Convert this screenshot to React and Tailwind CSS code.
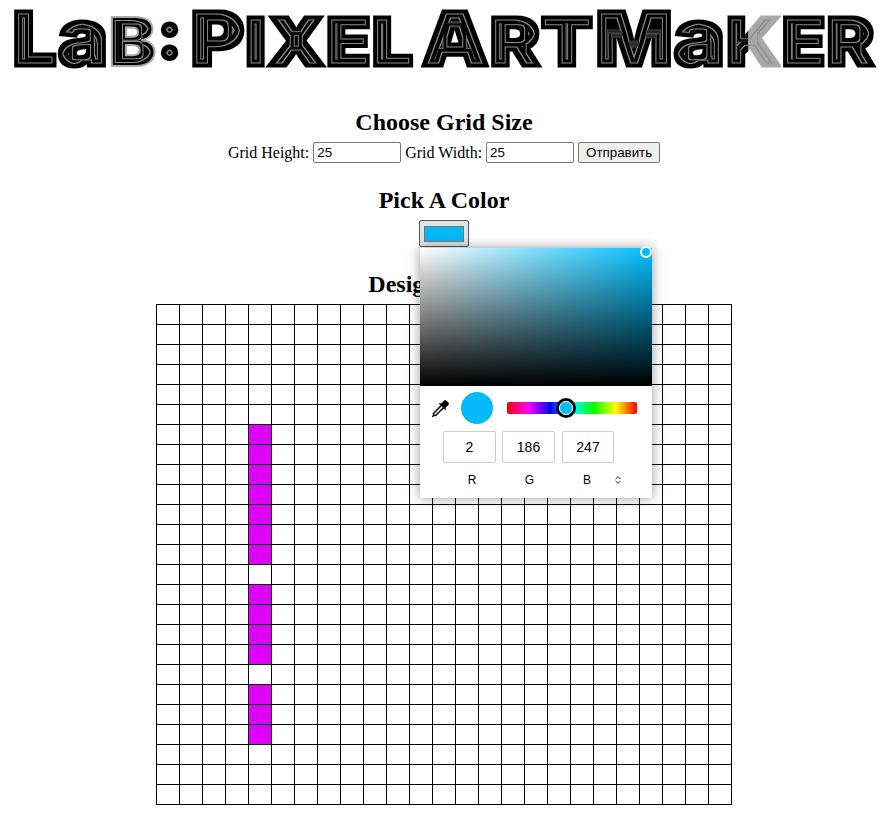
import React from 'react';
import { BsEyedropper } from 'react-icons/bs';
import { ChevronsUpDown } from 'lucide-react';

const ROWS = 25;
const COLS = 25;
const PAINTED_COL = 4;
const PAINTED_ROWS = [6, 7, 8, 9, 10, 11, 12, 14, 15, 16, 17, 19, 20, 21];

// Inline contour lines on the title letters
const ContourFilter = () => (
  <svg className="absolute w-0 h-0" aria-hidden="true">
    <defs>
      <filter id="contour" x="-5%" y="-25%" width="110%" height="150%" colorInterpolationFilters="sRGB">
        <feMorphology in="SourceAlpha" operator="erode" radius="4" result="e4" />
        <feMorphology in="SourceAlpha" operator="erode" radius="5" result="e5" />
        <feMorphology in="SourceAlpha" operator="erode" radius="8" result="e8" />
        <feMorphology in="SourceAlpha" operator="erode" radius="9" result="e9" />
        <feComposite in="e4" in2="e5" operator="out" result="r1" />
        <feComposite in="e8" in2="e9" operator="out" result="r2" />
        <feFlood floodColor="#8c8c8c" />
        <feComposite in2="r1" operator="in" result="l1" />
        <feFlood floodColor="#8c8c8c" />
        <feComposite in2="r2" operator="in" result="l2" />
        <feMerge>
          <feMergeNode in="SourceGraphic" />
          <feMergeNode in="l1" />
          <feMergeNode in="l2" />
        </feMerge>
      </filter>
    </defs>
  </svg>
);

const Title = () => (
  <h1 className="flex items-baseline h-[86px] pl-[12px] -mt-[6px] whitespace-nowrap [font-family:Inter,sans-serif] font-black leading-[86px] text-black [-webkit-text-stroke:3px_black] [filter:url(#contour)]">
    <span className="block w-[178px] origin-left scale-x-[1.05]">
      <span className="text-[76px]">L</span>
      <span className="text-[82px]">a</span>
      <span className="text-[68px] [-webkit-text-stroke:2px_#aaaaaa]">B</span>
      <span className="text-[68px]">:</span>
    </span>
    <span className="block w-[231px] origin-left scale-x-[1.1]">
      <span className="text-[76px]">P</span>
      <span className="text-[68px]">IXEL</span>
    </span>
    <span className="block w-[174px] origin-left scale-x-[1.13]">
      <span className="text-[76px]">A</span>
      <span className="text-[68px]">RT</span>
    </span>
    <span className="block w-[282px] origin-left scale-x-[1.075]">
      <span className="text-[76px]">M</span>
      <span className="text-[82px]">a</span>
      <span className="text-[68px] bg-[linear-gradient(to_right,#000_40%,#a8a8a8_40%)] bg-clip-text text-transparent [-webkit-text-stroke:3px_transparent]">K</span>
      <span className="text-[68px]">ER</span>
    </span>
  </h1>
);

const Heading = ({ children, className = '' }) => (
  <h2 className={`text-2xl font-bold leading-[27px] text-center ${className}`}>{children}</h2>
);

const ColorPicker = () => (
  <div className="absolute top-[28px] left-[1px] w-[232px] h-[250px] bg-white shadow-[0_0_12px_rgba(0,0,0,0.4)] z-10 [font-family:'Liberation_Sans',sans-serif]">
    <div className="relative h-[138px] bg-[linear-gradient(to_bottom,transparent,#000),linear-gradient(to_right,#fff,#00bfff)]">
      <span className="absolute top-[-2px] right-[0px] w-[12px] h-[12px] rounded-full border-2 border-white bg-[#02baf7]" />
    </div>
    <div className="flex items-center h-[44px]">
      <BsEyedropper className="ml-[12px] w-[17px] h-[17px] text-black" stroke="currentColor" strokeWidth="0.5" />
      <span className="ml-[12px] w-[32px] h-[32px] rounded-full bg-[#02baf7]" />
      <div className="relative ml-[14px] w-[130px] h-[12px] rounded-[2px] bg-[linear-gradient(to_right,#f00,#f0f,#00f,#0ff,#0f0,#ff0,#f00)]">
        <span className="absolute left-[49px] top-[-4px] w-[20px] h-[20px] rounded-full border-[3px] border-black bg-[#02baf7] outline-1 -outline-offset-4 outline-white" />
      </div>
    </div>
    <div className="flex ml-[23px] mt-[1px]">
      <div className="w-[53px] h-[32px] flex items-center justify-center border border-[#ccc] rounded-[2px] text-sm text-black">2</div>
      <div className="ml-[6px] w-[53px] h-[32px] flex items-center justify-center border border-[#ccc] rounded-[2px] text-sm text-black">186</div>
      <div className="ml-[7px] w-[52px] h-[32px] flex items-center justify-center border border-[#ccc] rounded-[2px] text-sm text-black">247</div>
    </div>
    <div className="relative flex ml-[23px] mt-[10px] text-xs leading-[14px]">
      <span className="w-[53px] text-center pl-[5px]">R</span>
      <span className="ml-[7px] w-[53px] text-center">G</span>
      <span className="ml-[5px] w-[52px] text-center">B</span>
      <ChevronsUpDown className="absolute left-[170px] top-[2px] w-[10px] h-[10px] text-black" />
    </div>
  </div>
);

const Canvas = () => (
  <table className="mx-auto mt-[6px] w-[576px] table-fixed border border-black">
    <tbody>
      {Array.from({ length: ROWS }).map((_, r) => (
        <tr key={r} className="h-[20px]">
          {Array.from({ length: COLS }).map((_, c) => (
            <td
              key={c}
              className={`border border-black p-0 ${c === PAINTED_COL && PAINTED_ROWS.includes(r) ? 'bg-[#e000fa]' : ''}`}
            />
          ))}
        </tr>
      ))}
    </tbody>
  </table>
);

export default function App() {
  return (
    <div className="flow-root w-[888px] min-h-[830px] bg-white text-black [font-family:'Liberation_Serif',serif] text-base">
      <ContourFilter />
      <Title />
      <Heading className="mt-[29px]">Choose Grid Size</Heading>
      <form className="flex justify-center items-center mt-[6px] h-[21px] leading-[18px]">
        <label>Grid Height:</label>
        <input
          type="text"
          defaultValue="25"
          className="ml-[4px] w-[88px] h-[21px] px-[3px] border border-[#767676] rounded-[2px] text-[13.33px] [font-family:'Liberation_Sans',sans-serif]"
        />
        <label className="ml-[4px]">Grid Width:</label>
        <input
          type="text"
          defaultValue="25"
          className="ml-[4px] w-[88px] h-[21px] px-[3px] border border-[#767676] rounded-[2px] text-[13.33px] [font-family:'Liberation_Sans',sans-serif]"
        />
        <button
          type="button"
          className="ml-[4px] w-[82px] h-[21px] border border-[#767676] rounded-[2px] bg-[#efefef] text-[13.33px] [font-family:'Liberation_Sans',sans-serif]"
        >
          Отправить
        </button>
      </form>
      <Heading className="mt-[24px]">Pick A Color</Heading>
      <div className="relative w-[50px] h-[27px] mt-[6px] ml-[419px]">
        <div className="w-full h-full flex items-center justify-center bg-[#e3e3e3] border border-[#5a5a5a] rounded-[2px]">
          <span className="w-[40px] h-[16px] bg-[#02baf7] border border-[#767676]" />
        </div>
        <ColorPicker />
      </div>
      <Heading className="mt-[24px]">Design Canvas</Heading>
      <Canvas />
    </div>
  );
}
